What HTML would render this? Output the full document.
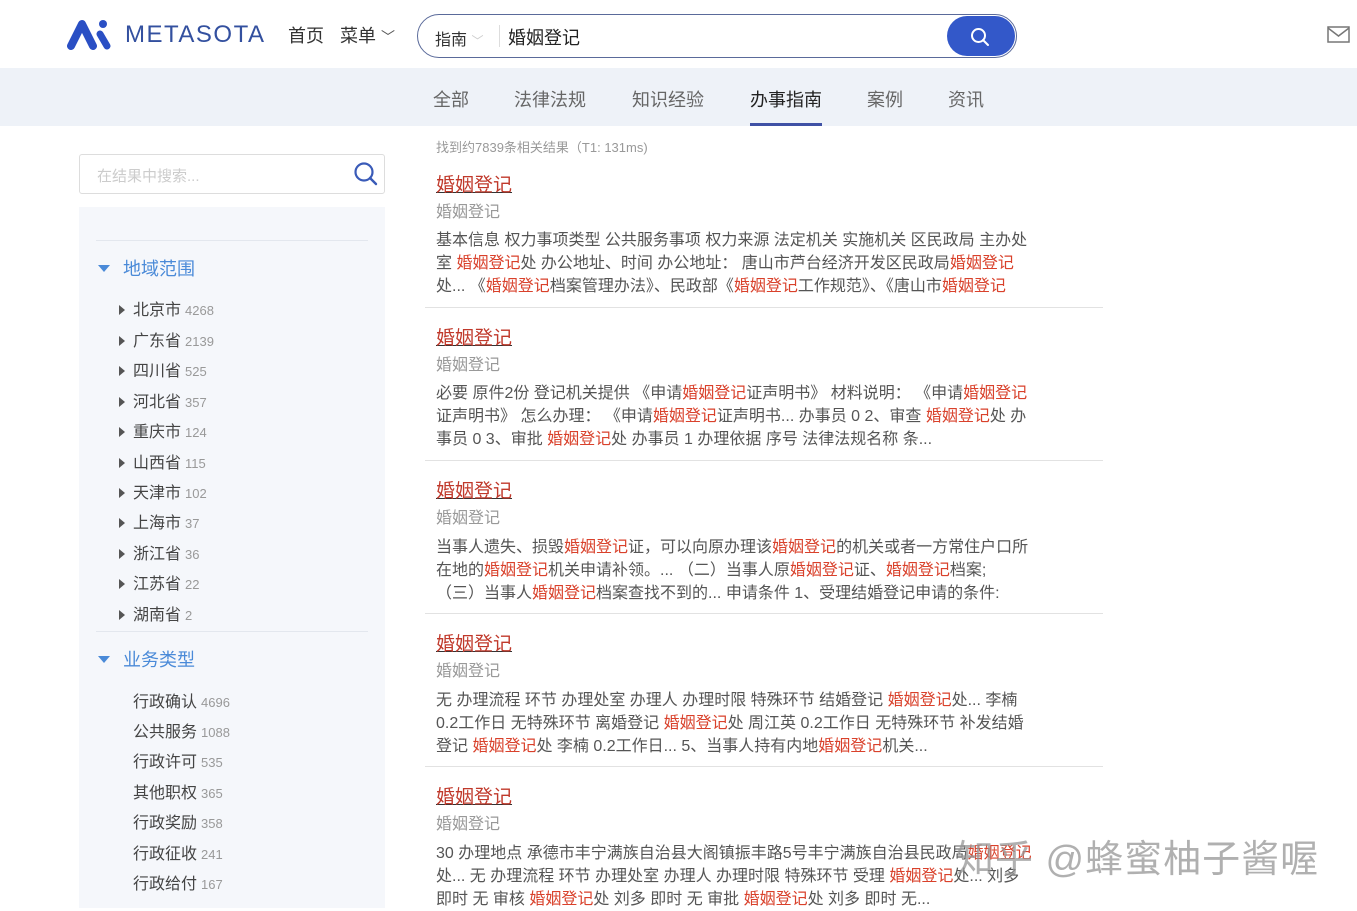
<!DOCTYPE html>
<html><head><meta charset="utf-8">
<style>
*{margin:0;padding:0;box-sizing:border-box}
body{width:1357px;height:908px;overflow:hidden;background:#fff;font-family:"Liberation Sans","Noto Sans CJK SC",sans-serif;position:relative;color:#333}
.a{position:absolute;white-space:nowrap}
.nav{position:absolute;left:0;top:68px;width:1357px;height:58px;background:#eef2f8}
.tab{position:absolute;top:89px;font-size:18px;color:#666;line-height:22px}
.side{position:absolute;left:79px;top:207px;width:306px;height:701px;background:#f5f7fb}
.hl{position:absolute;height:1px;background:#e3e7ee}
.it{position:absolute;left:133px;font-size:16px;color:#444;line-height:20px;margin-top:1px}
.it small{font-size:13px;color:#999;margin-left:4px}
.tri{position:absolute;left:119px;width:0;height:0;border-top:5px solid transparent;border-bottom:5px solid transparent;border-left:6px solid #555}
.sec{position:absolute;left:123px;font-size:18px;color:#4a8ad8;margin-top:-1px}
.sect{position:absolute;left:99px;width:0;height:0;border-left:6px solid transparent;border-right:6px solid transparent;border-top:7px solid #4a8ad8}
.t{position:absolute;left:436px;font-size:19px;color:#c0392b;text-decoration:underline;text-decoration-color:#333;line-height:22px;margin-top:2px}
.st{position:absolute;left:436px;font-size:16px;color:#999;line-height:20px;margin-top:2px}
.b{position:absolute;left:436px;font-size:16px;color:#555;line-height:23px;white-space:nowrap;margin-top:3px}
.b em{font-style:normal;color:#d9412b}
.sep{position:absolute;left:425px;width:678px;height:1px;background:#e2e2e2}
</style></head><body>
<svg class="a" style="left:67px;top:18px" width="46" height="32" viewBox="0 0 46 32">
<path d="M4 28 L15 6 L26 28" stroke="#2a4fc4" stroke-width="8" fill="none" stroke-linecap="round" stroke-linejoin="round"/>
<circle cx="36" cy="6" r="4" fill="#2a4fc4"/>
<path d="M33 16 L40 28" stroke="#2a4fc4" stroke-width="7" stroke-linecap="round"/>
</svg>
<div class="a" style="left:125px;top:21px;font-size:24px;letter-spacing:1.5px;color:#33509f">METASOTA</div>
<div class="a" style="left:288px;top:22px;font-size:18px;color:#333">首页</div>
<div class="a" style="left:340px;top:22px;font-size:18px;color:#333">菜单 <span style="font-size:14px;color:#555">﹀</span></div>
<div class="a" style="left:417px;top:14px;width:600px;height:44px;border:1.5px solid #5a6a9a;border-radius:22px"></div>
<div class="a" style="left:435px;top:26px;font-size:16px;color:#333">指南 <span style="color:#ccc;font-size:12px">﹀</span></div>
<div class="a" style="left:499px;top:25px;width:1px;height:22px;background:#ddd"></div>
<div class="a" style="left:508px;top:24px;font-size:18px;color:#222">婚姻登记</div>
<div class="a" style="left:947px;top:16px;width:68px;height:40px;background:#3358c9;border-radius:20px"></div>
<svg class="a" style="left:970px;top:27px" width="20" height="20" viewBox="0 0 20 20"><circle cx="8.5" cy="8.5" r="6.5" stroke="#fff" stroke-width="2" fill="none"/><path d="M13 13 L18 18" stroke="#fff" stroke-width="2" stroke-linecap="round"/></svg>
<svg class="a" style="left:1327px;top:26px" width="23" height="17" viewBox="0 0 23 17"><rect x="1" y="1" width="21" height="15" fill="none" stroke="#777" stroke-width="1.5"/><path d="M1 2 L11.5 10 L22 2" fill="none" stroke="#777" stroke-width="1.5"/></svg>

<div class="nav"></div>
<div class="tab" style="left:433px">全部</div>
<div class="tab" style="left:514px">法律法规</div>
<div class="tab" style="left:632px">知识经验</div>
<div class="tab" style="left:750px;color:#222">办事指南</div>
<div class="a" style="left:750px;top:123px;width:72px;height:3px;background:#3f51a5"></div>
<div class="tab" style="left:867px">案例</div>
<div class="tab" style="left:948px">资讯</div>

<div class="a" style="left:79px;top:154px;width:306px;height:40px;border:1px solid #ddd;border-radius:3px"></div>
<div class="a" style="left:97px;top:165px;font-size:15px;color:#ccc">在结果中搜索...</div>
<svg class="a" style="left:353px;top:161px" width="26" height="26" viewBox="0 0 26 26"><circle cx="11" cy="11" r="8.5" stroke="#3a5bb8" stroke-width="2.2" fill="none"/><path d="M17 17 L23 23" stroke="#3a5bb8" stroke-width="2.4" stroke-linecap="round"/></svg>
<div class="side"></div>
<div class="hl" style="left:96px;top:240px;width:272px"></div>
<div class="sect" style="left:98px;top:265px"></div>
<div class="sec" style="top:256px">地域范围</div>
<div class="tri" style="top:305px"></div><div class="it" style="top:300px">北京市<small>4268</small></div>
<div class="tri" style="top:336px"></div><div class="it" style="top:331px">广东省<small>2139</small></div>
<div class="tri" style="top:366px"></div><div class="it" style="top:361px">四川省<small>525</small></div>
<div class="tri" style="top:397px"></div><div class="it" style="top:392px">河北省<small>357</small></div>
<div class="tri" style="top:427px"></div><div class="it" style="top:422px">重庆市<small>124</small></div>
<div class="tri" style="top:458px"></div><div class="it" style="top:453px">山西省<small>115</small></div>
<div class="tri" style="top:488px"></div><div class="it" style="top:483px">天津市<small>102</small></div>
<div class="tri" style="top:518px"></div><div class="it" style="top:513px">上海市<small>37</small></div>
<div class="tri" style="top:549px"></div><div class="it" style="top:544px">浙江省<small>36</small></div>
<div class="tri" style="top:579px"></div><div class="it" style="top:574px">江苏省<small>22</small></div>
<div class="tri" style="top:610px"></div><div class="it" style="top:605px">湖南省<small>2</small></div>
<div class="hl" style="left:96px;top:631px;width:272px"></div>
<div class="sect" style="left:98px;top:656px"></div>
<div class="sec" style="top:647px">业务类型</div>
<div class="it" style="top:692px">行政确认<small>4696</small></div>
<div class="it" style="top:722px">公共服务<small>1088</small></div>
<div class="it" style="top:752px">行政许可<small>535</small></div>
<div class="it" style="top:783px">其他职权<small>365</small></div>
<div class="it" style="top:813px">行政奖励<small>358</small></div>
<div class="it" style="top:844px">行政征收<small>241</small></div>
<div class="it" style="top:874px">行政给付<small>167</small></div>

<div class="a" style="left:436px;top:137px;font-size:13px;color:#999">找到约7839条相关结果（T1: 131ms)</div>

<div class="t" style="top:173px">婚姻登记</div>
<div class="st" style="top:201px">婚姻登记</div>
<div class="b" style="top:226px">基本信息 权力事项类型 公共服务事项 权力来源 法定机关 实施机关 区民政局 主办处<br>室 <em>婚姻登记</em>处 办公地址、时间 办公地址： 唐山市芦台经济开发区民政局<em>婚姻登记</em><br>处... 《<em>婚姻登记</em>档案管理办法》、民政部《<em>婚姻登记</em>工作规范》、《唐山市<em>婚姻登记</em></div>
<div class="sep" style="top:307px"></div>

<div class="t" style="top:326px">婚姻登记</div>
<div class="st" style="top:354px">婚姻登记</div>
<div class="b" style="top:379px">必要 原件2份 登记机关提供 《申请<em>婚姻登记</em>证声明书》 材料说明： 《申请<em>婚姻登记</em><br>证声明书》 怎么办理： 《申请<em>婚姻登记</em>证声明书... 办事员 0 2、审查 <em>婚姻登记</em>处 办<br>事员 0 3、审批 <em>婚姻登记</em>处 办事员 1 办理依据 序号 法律法规名称 条...</div>
<div class="sep" style="top:460px"></div>

<div class="t" style="top:479px">婚姻登记</div>
<div class="st" style="top:507px">婚姻登记</div>
<div class="b" style="top:533px">当事人遗失、损毁<em>婚姻登记</em>证，可以向原办理该<em>婚姻登记</em>的机关或者一方常住户口所<br>在地的<em>婚姻登记</em>机关申请补领。... （二）当事人原<em>婚姻登记</em>证、<em>婚姻登记</em>档案;<br>（三）当事人<em>婚姻登记</em>档案查找不到的... 申请条件 1、受理结婚登记申请的条件:</div>
<div class="sep" style="top:613px"></div>

<div class="t" style="top:632px">婚姻登记</div>
<div class="st" style="top:660px">婚姻登记</div>
<div class="b" style="top:686px">无 办理流程 环节 办理处室 办理人 办理时限 特殊环节 结婚登记 <em>婚姻登记</em>处... 李楠<br>0.2工作日 无特殊环节 离婚登记 <em>婚姻登记</em>处 周江英 0.2工作日 无特殊环节 补发结婚<br>登记 <em>婚姻登记</em>处 李楠 0.2工作日... 5、当事人持有内地<em>婚姻登记</em>机关...</div>
<div class="sep" style="top:766px"></div>

<div class="t" style="top:785px">婚姻登记</div>
<div class="st" style="top:813px">婚姻登记</div>
<div class="b" style="top:839px">30 办理地点 承德市丰宁满族自治县大阁镇振丰路5号丰宁满族自治县民政局<em>婚姻登记</em><br>处... 无 办理流程 环节 办理处室 办理人 办理时限 特殊环节 受理 <em>婚姻登记</em>处... 刘多<br>即时 无 审核 <em>婚姻登记</em>处 刘多 即时 无 审批 <em>婚姻登记</em>处 刘多 即时 无...</div>

<div class="a" style="left:956px;top:828px;font-size:38px;color:rgba(150,150,150,0.75);letter-spacing:1px">知乎 @蜂蜜柚子酱喔</div>
</body></html>
